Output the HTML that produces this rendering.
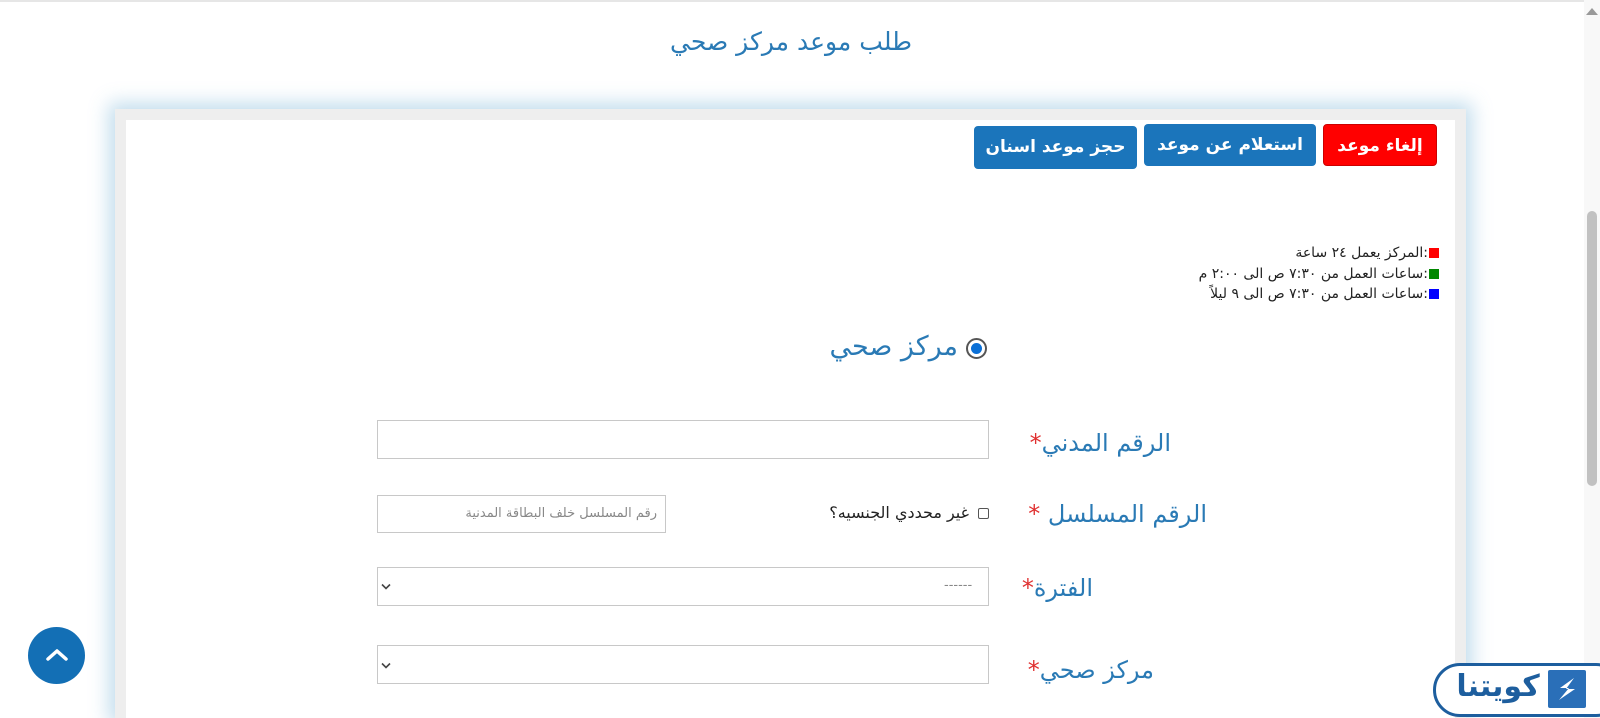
<!DOCTYPE html>
<html lang="ar"><head><meta charset="utf-8">
<style>
*{box-sizing:border-box;margin:0;padding:0}
html,body{width:1600px;height:718px;overflow:hidden}
body{background:#fff;font-family:"DejaVu Sans","Liberation Sans","Noto Sans CJK SC",sans-serif;position:relative}
.a{position:absolute;white-space:nowrap}
.r{direction:rtl}
.topline{position:absolute;left:0;top:0;width:1584px;height:2px;background:#e6e6e6}
.card{position:absolute;left:115px;top:109px;width:1351px;height:609px;background:#eee;box-shadow:0 0 18px 6px rgba(120,180,215,.45)}
.inner{position:absolute;left:126px;top:120px;width:1329px;height:598px;background:#fff}
.btn{position:absolute;color:#fff;font-weight:bold;font-size:17px;border-radius:4px;text-align:center;direction:rtl}
.lbl{color:#2a7ab5;font-size:24px;direction:rtl;text-align:right}
.st{color:#e03030}
.inp{position:absolute;border:1px solid #c8c8c8;background:#fff}
.leg{font-size:14px;color:#222;direction:rtl;text-align:right;right:161px}
.sq{display:inline-block;width:10px;height:10px;margin-left:1px;vertical-align:-1px}
</style></head><body>
<div class="topline"></div>
<div class="a r" style="left:0;width:1582px;text-align:center;top:27px;font-size:25px;color:#2a7ab5">طلب موعد مركز صحي</div>
<div class="card"></div>
<div class="inner"></div>

<div class="btn" style="left:1323px;top:124px;width:114px;height:42px;line-height:42px;background:#f00;border:1px solid #c00">إلغاء موعد</div>
<div class="btn" style="left:1144px;top:124px;width:172px;height:42px;line-height:42px;background:#1b75bb">استعلام عن موعد</div>
<div class="btn" style="left:974px;top:126px;width:163px;height:43px;line-height:43px;background:#1b75bb">حجز موعد اسنان</div>

<div class="a leg" style="top:245px"><span class="sq" style="background:#f00"></span>:المركز يعمل ٢٤ ساعة</div>
<div class="a leg" style="top:266px"><span class="sq" style="background:#080"></span>:ساعات العمل من ٧:٣٠ ص الى ٢:٠٠ م</div>
<div class="a leg" style="top:286px"><span class="sq" style="background:#00f"></span>:ساعات العمل من ٧:٣٠ ص الى ٩ ليلاً</div>

<div class="a" style="left:966px;top:338px;width:21px;height:21px;border-radius:50%;border:2px solid #555;background:#fff"></div>
<div class="a" style="left:971px;top:343px;width:11px;height:11px;border-radius:50%;background:#0a6fd6"></div>
<div class="a lbl" style="right:642px;top:331px;font-size:27px">مركز صحي</div>

<div class="a lbl" style="right:429px;top:429px">الرقم المدني<span class="st">*</span></div>
<div class="inp" style="left:377px;top:420px;width:612px;height:39px"></div>

<div class="a lbl" style="right:393px;top:500px">الرقم المسلسل<span class="st"> *</span></div>
<div class="a" style="left:978px;top:508px;width:11px;height:11px;border:1px solid #555;border-radius:2px"></div>
<div class="a r" style="right:631px;top:503px;font-size:16px;color:#222">غير محددي الجنسيه؟</div>
<div class="inp" style="left:377px;top:495px;width:289px;height:38px"></div>
<div class="a r" style="right:943px;top:506px;font-size:13px;color:#888">رقم المسلسل خلف البطاقة المدنية</div>

<div class="a lbl" style="right:507px;top:574px">الفترة<span class="st">*</span></div>
<div class="inp" style="left:377px;top:567px;width:612px;height:39px"></div>
<div class="a" style="left:944px;top:578px;font-size:13px;color:#888">------</div>
<svg class="a" style="left:381px;top:583px" width="10" height="7"><path d="M1 1.5L5 5.5 9 1.5" fill="none" stroke="#444" stroke-width="1.6"/></svg>

<div class="a lbl" style="right:446px;top:656px">مركز صحي<span class="st">*</span></div>
<div class="inp" style="left:377px;top:645px;width:612px;height:39px"></div>
<svg class="a" style="left:381px;top:662px" width="10" height="7"><path d="M1 1.5L5 5.5 9 1.5" fill="none" stroke="#444" stroke-width="1.6"/></svg>

<div class="a" style="left:28px;top:627px;width:57px;height:57px;border-radius:50%;background:#136fb5"></div>
<svg class="a" style="left:42px;top:640px" width="30" height="30"><path d="M6 19L15 11 24 19" fill="none" stroke="#fff" stroke-width="3.5" stroke-linecap="round" stroke-linejoin="round"/></svg>

<div class="a" style="left:1584px;top:0;width:16px;height:718px;background:#f8f8f8"></div>
<svg class="a" style="left:1585px;top:6px" width="14" height="10"><path d="M1 9L7 2 13 9Z" fill="#999"/></svg>
<div class="a" style="left:1587px;top:211px;width:10px;height:275px;border-radius:5px;background:#c1c1c1"></div>

<div class="a" style="left:1433px;top:663px;width:190px;height:54px;border:3.5px solid #1d5e9e;border-radius:27px;background:#fff"></div>
<div class="a" style="left:1548px;top:670px;width:38px;height:38px;background:#2a6fb8;border-radius:2px"></div>
<svg class="a" style="left:1548px;top:670px" width="38" height="38"><path d="M26 8L12 18H21L11 30 27 19H18Z" fill="#fff"/></svg>
<div class="a r" style="left:1453px;top:668px;width:90px;text-align:center;font-size:30px;font-weight:bold;color:#1d5e9e;line-height:38px">كويتنا</div>
</body></html>
